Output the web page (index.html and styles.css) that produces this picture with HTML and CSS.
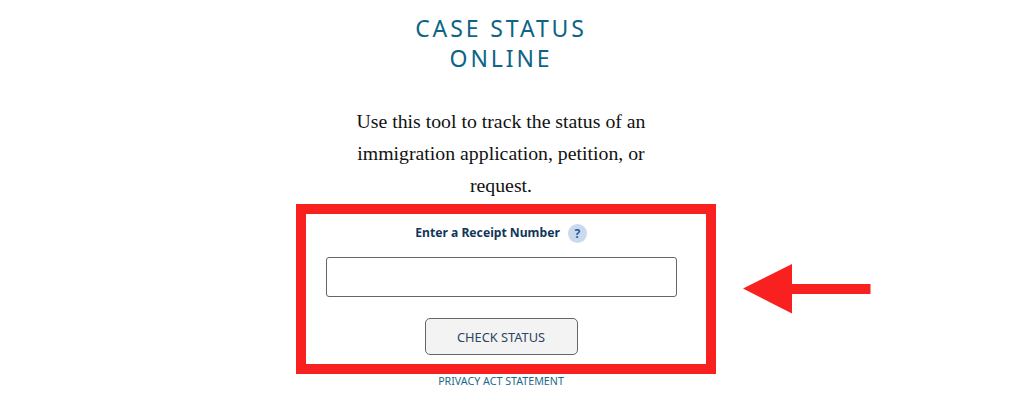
FILE: index.html
```html
<!DOCTYPE html>
<html lang="en">
<head>
  <meta charset="UTF-8" />
  <title>Case Status Online</title>
  <link rel="stylesheet" href="styles.css">
</head>
<body>

  <main class="page">
    <h1>Case Status<br>Online</h1>

    <p class="intro">Use this tool to track the status of an<br>immigration application, petition, or<br>request.</p>

    <!-- Red box around the form -->
    <form class="caja">
      <div class="etiqueta">
        <label for="recibo">Enter a Receipt Number</label>
        <span class="ayuda">?</span>
      </div>
      <input id="recibo" type="text">
      <button type="button">Check Status</button>

      <svg class="flecha" width="128" height="50" viewBox="0 0 128 50">
        <path d="M0 24.5 L49 0 V20 H127.500 V30 H49 V49.500 Z" fill="#f9211f"/>
      </svg>
    </form>

    <a class="privacidad" href="#">Privacy Act Statement</a>
  </main>

</body>
</html>
```

FILE: styles.css
```css
body {
  margin: 0;
  background-color: #fff;
  font-family: "Noto Sans", sans-serif;
}
.page {
  width: 1002px;
  display: flex;
  flex-direction: column;
  align-items: center;
}
h1 {
  margin: 13px 0 0;
  color: #0d6486;
  font-size: 23px;
  font-weight: 400;
  line-height: 30px;
  letter-spacing: 2.9px;
  text-align: center;
  text-transform: uppercase;
}
.intro {
  margin: 32px 0 0;
  color: #111;
  font-family: "Liberation Serif", serif;
  font-size: 19.800px;
  line-height: 32px;
  text-align: center;
}
.caja {
  position: relative;
  box-sizing: border-box;
  width: 420px;
  height: 170px;
  margin: 3px 0 0 10px;
  padding-right: 10px;
  border: 10px solid #f9211f;
  display: flex;
  flex-direction: column;
  align-items: center;
}
.etiqueta {
  display: flex;
  align-items: center;
  gap: 8px;
  height: 26px;
  margin-top: 6px;
  color: #12365a;
  font-size: 12.150px;
  font-weight: 700;
}
.etiqueta label {
  margin-top: -2px;
}
.ayuda {
  width: 19px;
  height: 19px;
  border-radius: 50%;
  background-color: #c9d9ee;
  color: #2b5a94;
  font-size: 12px;
  line-height: 19px;
  text-align: center;
}
input {
  box-sizing: border-box;
  width: 351px;
  height: 40px;
  margin-top: 11px;
  border: 1px solid #666;
  border-radius: 3px;
  background-color: #fff;
}
button {
  box-sizing: border-box;
  width: 153px;
  height: 37px;
  margin-top: 21px;
  border: 1px solid #666;
  border-radius: 5px;
  background-color: #f3f3f3;
  color: #2c4560;
  font-family: "Noto Sans", sans-serif;
  font-size: 12.800px;
  text-transform: uppercase;
}
.flecha {
  position: absolute;
  left: 437px;
  top: 50px;
}
.privacidad {
  color: #1c6a88;
  font-size: 10.700px;
  line-height: 15px;
  text-decoration: none;
  text-transform: uppercase;
}
```
